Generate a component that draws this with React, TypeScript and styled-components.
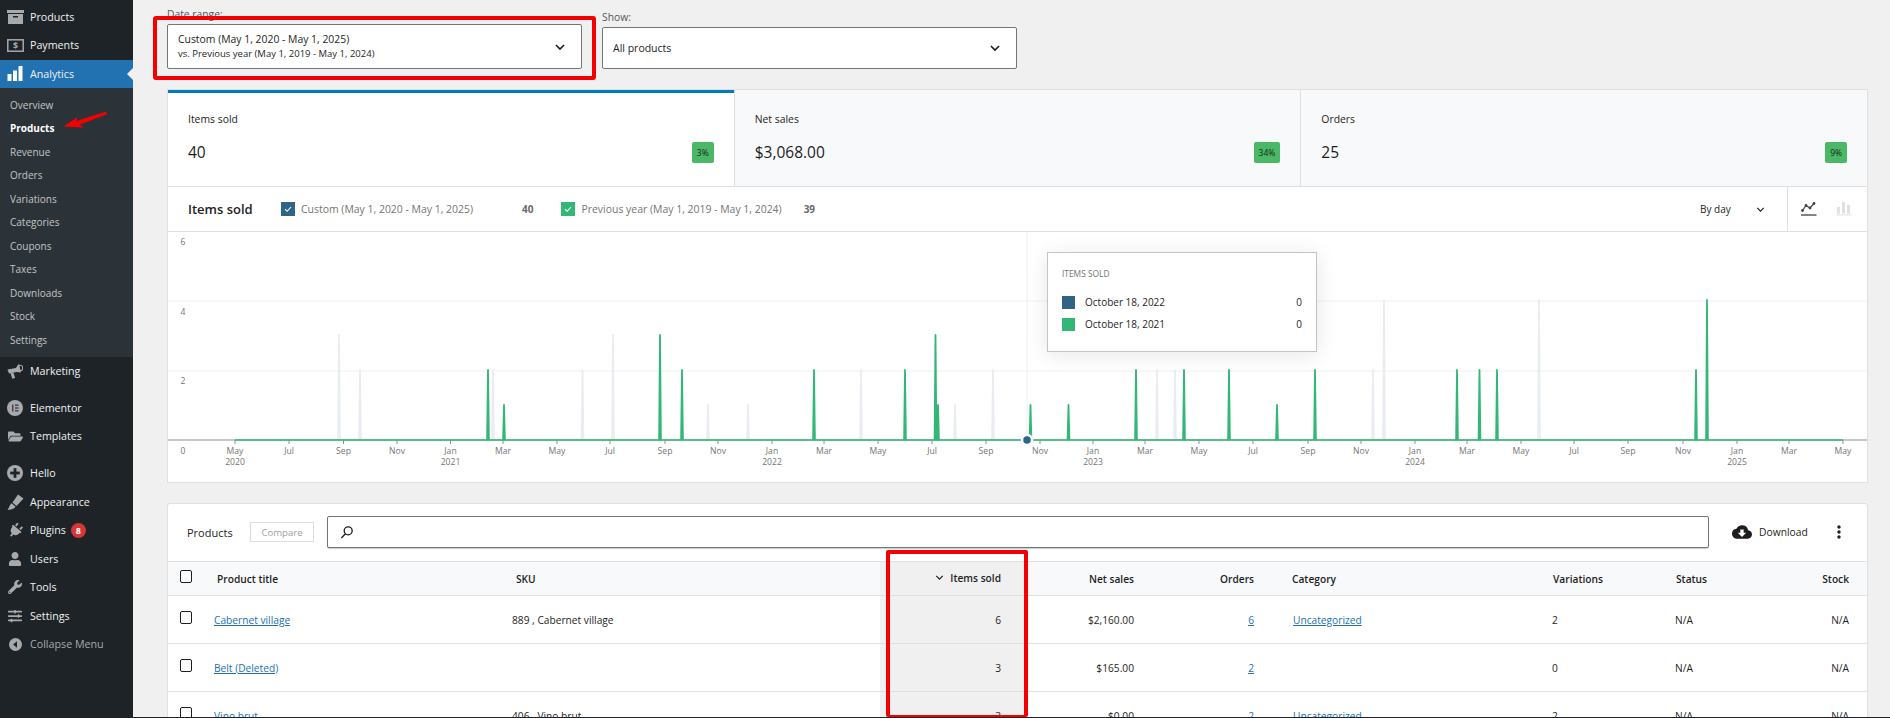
import React, { FC, ReactNode } from "react";
import styled, { createGlobalStyle } from "styled-components";
import { FaFolderOpen, FaPlug, FaUser, FaWrench, FaSlidersH } from "react-icons/fa";
import { MdCloudDownload, MdMoreVert } from "react-icons/md";

const FONT = `"Open Sans", "Noto Sans", sans-serif`;

const GlobalStyle = createGlobalStyle`
  html, body {
    margin: 0;
    padding: 0;
    height: 100%;
    overflow: hidden;
    background: #f0f0f0;
    font-family: ${FONT};
  }
`;

const Shell = styled.div`
  display: flex;
  height: 717px;
  overflow: hidden;
  border-bottom: 1px solid #1d2327;
`;

/* ---------- sidebar ---------- */

const Sidebar = styled.nav`
  position: relative;
  width: 133px;
  flex: none;
  background: #1d2327;
  padding-top: 2.6px;
  color: #f0f0f1;
  font-size: 10.7px;
`;

const MenuItem = styled.div<{ $active?: boolean; $gap?: boolean; $muted?: boolean }>`
  position: relative;
  display: flex;
  align-items: center;
  height: 28.5px;
  margin-top: ${(p) => (p.$gap ? "8.5px" : "0")};
  background: ${(p) => (p.$active ? "#2271b1" : "transparent")};
  color: ${(p) => (p.$muted ? "#a7aaad" : "#f0f0f1")};
  ${(p) =>
    p.$active &&
    `&::after {
      content: "";
      position: absolute;
      right: 0;
      top: 8px;
      border: 6px solid transparent;
      border-right-color: #f0f0f0;
    }`}
`;

const MenuIcon = styled.span<{ $active?: boolean }>`
  display: flex;
  justify-content: center;
  width: 30px;
  flex: none;
  color: ${(p) => (p.$active ? "#ffffff" : "#a7aaad")};
`;

const TiltedPlug = styled(FaPlug)`
  transform: rotate(40deg);
`;

const SubMenu = styled.div`
  background: #2c3338;
  padding: 5.5px 0 4.6px;
`;

const SubItem = styled.div<{ $current?: boolean }>`
  height: 23.5px;
  line-height: 23.5px;
  padding-left: 10px;
  font-size: 10px;
  color: ${(p) => (p.$current ? "#ffffff" : "#c3c4c7")};
  font-weight: ${(p) => (p.$current ? 700 : 400)};
`;

const Badge = styled.span`
  display: inline-flex;
  align-items: center;
  justify-content: center;
  width: 15px;
  height: 15px;
  margin-left: 5px;
  border-radius: 50%;
  background: #d63638;
  color: #fff;
  font-size: 9px;
  font-weight: 700;
`;

const ArrowMark = styled.svg`
  position: absolute;
  left: 60px;
  top: 108px;
`;

/* ---------- content ---------- */

const Main = styled.main`
  flex: 1;
  min-width: 0;
  padding: 0 22px 0 34px;
  color: #1e1e1e;
`;

const Filters = styled.div`
  display: flex;
  align-items: flex-end;
  height: 69px;
  margin-bottom: 20px;
`;

const FilterGroup = styled.div<{ $width: number; $gap: number }>`
  position: relative;
  width: ${(p) => p.$width}px;
  margin-right: ${(p) => p.$gap}px;
`;

const FilterLabel = styled.div`
  font-size: 10.3px;
  line-height: 14px;
  color: #50575e;
  margin-bottom: 3px;
`;

const SelectBox = styled.div<{ $height: number }>`
  display: flex;
  align-items: center;
  justify-content: space-between;
  height: ${(p) => p.$height}px;
  box-sizing: border-box;
  padding: 0 14px 0 10px;
  background: #fff;
  border: 1px solid #757575;
  border-radius: 2px;
  font-size: 10.5px;
`;

const SelectMain = styled.div`
  font-size: 10.4px;
  line-height: 15px;
`;

const SelectSub = styled.div`
  font-size: 9.5px;
  line-height: 14px;
`;

const RedFrame = styled.div`
  position: absolute;
  left: -14px;
  right: -14px;
  top: 9px;
  bottom: -11px;
  border: 4px solid #f30000;
  border-radius: 3px;
  pointer-events: none;
`;

const Panel = styled.section`
  background: #fff;
  border: 1px solid #e0e0e0;
`;

const StatRow = styled.div`
  display: flex;
  height: 96px;
  border-bottom: 1px solid #e0e0e0;
`;

const Stat = styled.div<{ $active?: boolean }>`
  flex: 1;
  box-sizing: border-box;
  padding: 21px 20px 0;
  background: ${(p) => (p.$active ? "#fff" : "#f8f9fa")};
  box-shadow: ${(p) => (p.$active ? "inset 0 3px 0 #007cba" : "none")};
  border-right: 1px solid #e0e0e0;
  &:last-child {
    border-right: 0;
  }
`;

const StatLabel = styled.div`
  font-size: 10.4px;
  line-height: 16px;
`;

const StatValueRow = styled.div`
  display: flex;
  align-items: center;
  justify-content: space-between;
  margin-top: 14px;
`;

const StatValue = styled.div`
  font-size: 15.5px;
  line-height: 22px;
`;

const Delta = styled.div`
  display: flex;
  align-items: center;
  height: 21px;
  padding: 0 5px;
  border-radius: 2px;
  background: #4ab866;
  font-size: 8.5px;
`;

const ChartHeader = styled.div`
  display: flex;
  align-items: center;
  height: 44px;
  padding-left: 20px;
  border-bottom: 1px solid #e0e0e0;
`;

const ChartTitle = styled.div`
  width: 93px;
  flex: none;
  font-size: 13px;
  font-weight: 600;
`;

const LegendBox = styled.span<{ $color: string }>`
  display: flex;
  align-items: center;
  justify-content: center;
  width: 14px;
  height: 14px;
  margin-right: 6px;
  background: ${(p) => p.$color};
`;

const LegendLabel = styled.span`
  font-size: 10.45px;
  color: #757575;
`;

const LegendValue = styled.span<{ $left: number; $right: number }>`
  margin: 0 ${(p) => p.$right}px 0 ${(p) => p.$left}px;
  font-size: 10px;
  font-weight: 700;
  color: #6a6a6a;
`;

const IntervalSelect = styled.div`
  display: flex;
  align-items: center;
  margin-left: auto;
  height: 100%;
  font-size: 10px;
`;

const IntervalLabel = styled.span`
  width: 55px;
`;

const ChartTools = styled.div`
  display: flex;
  align-items: center;
  gap: 19px;
  height: 100%;
  margin-left: 21px;
  padding: 0 15px 0 13px;
  border-left: 1px solid #e0e0e0;
`;

const ChartBody = styled.div`
  position: relative;
  height: 250px;
`;

const ChartSvg = styled.svg`
  display: block;
`;

const AxisText = styled.text`
  font-family: ${FONT};
  font-size: 8.6px;
  fill: #757575;
  text-anchor: middle;
`;

const Tooltip = styled.div`
  position: absolute;
  left: 879px;
  top: 20px;
  width: 270px;
  height: 100px;
  padding: 14px 14px 0;
  box-sizing: border-box;
  background: #fff;
  border: 1px solid #c4c4c4;
  box-shadow: 0 3px 20px rgba(18, 24, 30, 0.1);
`;

const TooltipTitle = styled.div`
  font-size: 8.4px;
  line-height: 14px;
  color: #757575;
  margin-bottom: 10px;
`;

const TooltipRow = styled.div`
  display: flex;
  align-items: center;
  height: 22px;
  font-size: 10px;
  color: #1e1e1e;
`;

const Swatch = styled.span<{ $color: string }>`
  width: 13px;
  height: 13px;
  margin-right: 10px;
  background: ${(p) => p.$color};
`;

const TooltipValue = styled.span`
  margin-left: auto;
`;

const TablePanel = styled(Panel)`
  margin-top: 20px;
  border-radius: 3px 3px 0 0;
`;

const TableHeader = styled.div`
  display: flex;
  align-items: center;
  height: 57px;
  box-sizing: border-box;
  padding: 0 0 1px 19px;
`;

const TableTitle = styled.div`
  width: 63px;
  flex: none;
  font-size: 11px;
`;

const CompareButton = styled.div`
  display: flex;
  align-items: center;
  justify-content: center;
  width: 64px;
  height: 20px;
  box-sizing: border-box;
  border: 1px solid #ddd;
  font-size: 9.6px;
  color: #a0a0a0;
`;

const SearchBox = styled.div`
  display: flex;
  align-items: center;
  width: 1382px;
  height: 32px;
  box-sizing: border-box;
  margin-left: 13px;
  padding-left: 12px;
  background: #fff;
  border: 1px solid #757575;
  border-radius: 2px;
  box-shadow: 0 1px 1px rgba(0, 0, 0, 0.2);
`;

const DownloadButton = styled.div`
  display: flex;
  align-items: center;
  gap: 7px;
  margin-left: 23px;
  font-size: 10.3px;
`;

const MenuDots = styled.div`
  display: flex;
  margin-left: 21px;
`;

const Table = styled.table`
  width: 100%;
  table-layout: fixed;
  border-collapse: collapse;
  font-size: 10.2px;
`;

const Th = styled.th<{ $w?: number; $right?: boolean; $pl?: number; $pr?: number; $sorted?: boolean }>`
  width: ${(p) => (p.$w ? `${p.$w}px` : "auto")};
  height: 34px;
  box-sizing: border-box;
  padding: 0 ${(p) => p.$pr ?? 0}px 0 ${(p) => p.$pl ?? 0}px;
  text-align: ${(p) => (p.$right ? "right" : "left")};
  font-size: 10.2px;
  font-weight: 600;
  background: ${(p) => (p.$sorted ? "#f0f0f0" : "#f8f9fa")};
  border-top: 1px solid #e0e0e0;
  border-bottom: 1px solid #e0e0e0;
`;

const Td = styled.td<{ $right?: boolean; $pl?: number; $pr?: number; $sorted?: boolean }>`
  height: 48px;
  box-sizing: border-box;
  padding: 0 ${(p) => p.$pr ?? 0}px 0 ${(p) => p.$pl ?? 0}px;
  text-align: ${(p) => (p.$right ? "right" : "left")};
  background: ${(p) => (p.$sorted ? "#f0f0f0" : "#fff")};
  border-bottom: 1px solid #e0e0e0;
`;

const CheckBox = styled.span`
  display: block;
  width: 12px;
  height: 13px;
  box-sizing: border-box;
  margin-top: -4px;
  border: 1px solid #1e1e1e;
  border-radius: 2px;
  background: #fff;
`;

const CellLink = styled.a`
  color: #2271b1;
  text-decoration: underline;
`;

const SortedHead = styled.span`
  display: inline-flex;
  align-items: center;
  gap: 5px;
`;

const SortFrame = styled.div`
  position: absolute;
  left: 886px;
  top: 550px;
  width: 142px;
  height: 167px;
  box-sizing: border-box;
  border: 4px solid #f30000;
  border-bottom-width: 2px;
  border-radius: 2px;
  pointer-events: none;
`;

/* ---------- icons ---------- */

const Chevron: FC<{ size?: number; width?: number; color?: string }> = ({ size = 14, width = 1.6, color = "#1e1e1e" }) => (
  <svg width={size} height={size} viewBox="0 0 24 24" fill="none" stroke={color} strokeWidth={width * (24 / size)}>
    <path d="M5 8.5l7 7 7-7" />
  </svg>
);

const Tick: FC = () => (
  <svg width="10" height="10" viewBox="0 0 10 10" fill="none" stroke="#fff" strokeWidth="1.1">
    <path d="M2 5.2l2.1 2.1L8 3" />
  </svg>
);

const ArchiveIcon: FC = () => (
  <svg width="17" height="14" viewBox="0 0 17 14" fill="currentColor">
    <rect x="0" y="0" width="17" height="3" />
    <path d="M1 4h15v10H1z M6 6v1.4h5V6z" fillRule="evenodd" />
  </svg>
);

const PaymentIcon: FC = () => (
  <svg width="17" height="13" viewBox="0 0 17 13">
    <rect x="0.8" y="0.8" width="15.4" height="11.4" fill="none" stroke="currentColor" strokeWidth="1.5" />
    <text x="8.5" y="9.6" fontSize="9" fontWeight="700" textAnchor="middle" fill="currentColor" fontFamily={FONT}>
      $
    </text>
  </svg>
);

const BarsIcon: FC = () => (
  <svg width="16" height="15" viewBox="0 0 16 15" fill="currentColor">
    <rect x="0.5" y="8" width="4" height="7" />
    <rect x="6" y="4.5" width="4" height="10.5" />
    <rect x="11.5" y="0" width="4" height="15" />
  </svg>
);

const MegaphoneIcon: FC = () => (
  <svg width="16" height="16" viewBox="0 0 16 16" fill="currentColor">
    <path d="M0.5 6.5L9 5 12 0.8 14 9.5 9.8 9 2 10.5z" />
    <path d="M3.5 10.3l3-.6 1.6 5.3-2.8.8z" />
    <circle cx="13" cy="5" r="2.8" fill="none" stroke="currentColor" strokeWidth="1.1" />
  </svg>
);

const BrushIcon: FC = () => (
  <svg width="17" height="16" viewBox="0 0 17 16" fill="currentColor">
    <path d="M11 0.5L16.5 4.5 9.5 12 5.5 8.5z" />
    <path d="M4.7 9.3l3.9 3.4C7 15 3.5 15.8 0.5 16c1.8-2 1.6-5 4.2-6.7z" />
  </svg>
);

const ElementorIcon: FC = () => (
  <svg width="16" height="16" viewBox="0 0 16 16">
    <circle cx="8" cy="8" r="8" fill="#a7aaad" />
    <rect x="5" y="4.5" width="1.5" height="7" fill="#5c3a58" />
    <rect x="8" y="4.5" width="3.5" height="1.4" fill="#3a3f44" />
    <rect x="8" y="7.3" width="3.5" height="1.4" fill="#3a3f44" />
    <rect x="8" y="10.1" width="3.5" height="1.4" fill="#3a3f44" />
  </svg>
);

const HelloIcon: FC = () => (
  <svg width="16" height="16" viewBox="0 0 16 16">
    <circle cx="8" cy="8" r="8" fill="currentColor" />
    <rect x="6.6" y="3.2" width="2.8" height="9.6" fill="#1d2327" />
    <rect x="3.2" y="6.6" width="9.6" height="2.8" fill="#1d2327" />
  </svg>
);

const CollapseIcon: FC = () => (
  <svg width="13" height="13" viewBox="0 0 13 13">
    <circle cx="6.5" cy="6.5" r="6.5" fill="currentColor" />
    <path d="M8 3.2L4 6.5l4 3.3z" fill="#1d2327" />
  </svg>
);

const SearchIcon: FC = () => (
  <svg width="14" height="14" viewBox="0 0 14 14" fill="none" stroke="#1e1e1e" strokeWidth="1.3">
    <circle cx="8.2" cy="5.8" r="4" />
    <path d="M5.5 8.8L1.4 13" />
  </svg>
);

const LineChartIcon: FC = () => (
  <svg width="16" height="16" viewBox="0 0 16 16" fill="none" stroke="#3c434a" strokeWidth="1.2">
    <path d="M1.5 9.5L5 4.5l4 2.5 4-4.5" />
    <g fill="#3c434a" stroke="none">
      <circle cx="1.5" cy="9.5" r="1.4" />
      <circle cx="5" cy="4.5" r="1.4" />
      <circle cx="9" cy="7" r="1.4" />
      <circle cx="13" cy="2.5" r="1.4" />
    </g>
    <path d="M0 14h15.5" strokeWidth="1.3" />
  </svg>
);

const BarChartIcon: FC = () => (
  <svg width="16" height="16" viewBox="0 0 16 16" fill="#e0e0e0">
    <rect x="1" y="6" width="3" height="6.5" />
    <rect x="6" y="1" width="3" height="11.5" />
    <rect x="11" y="4" width="3" height="8.5" />
    <rect x="0" y="13.4" width="15.5" height="1" />
  </svg>
);

/* ---------- data ---------- */

const BASE_Y = 208;
const UNIT = 35;

const MONTHS = [
  ["May", "2020", 235], ["Jul", "", 289], ["Sep", "", 343.5], ["Nov", "", 397], ["Jan", "2021", 450.5],
  ["Mar", "", 503], ["May", "", 557], ["Jul", "", 610], ["Sep", "", 665], ["Nov", "", 718],
  ["Jan", "2022", 772], ["Mar", "", 824], ["May", "", 878], ["Jul", "", 932], ["Sep", "", 986],
  ["Nov", "", 1040], ["Jan", "2023", 1093], ["Mar", "", 1145], ["May", "", 1199], ["Jul", "", 1253],
  ["Sep", "", 1308], ["Nov", "", 1361], ["Jan", "2024", 1415], ["Mar", "", 1467], ["May", "", 1521],
  ["Jul", "", 1574], ["Sep", "", 1628], ["Nov", "", 1683], ["Jan", "2025", 1737], ["Mar", "", 1789], ["May", "", 1843],
] as const;

const PREVIOUS = [
  [339, 3], [360, 2], [493, 2], [582.5, 2], [613, 3], [708, 1], [748, 1], [861, 2],
  [955, 1], [993, 2], [1157, 2], [1175, 2], [1373, 2], [1384, 4], [1539, 4],
];

const CURRENT = [
  [488, 2], [504, 1], [660, 3], [682, 2], [814, 2], [905, 2], [935.5, 3], [938, 1], [1030.5, 1], [1068.5, 1],
  [1136, 2], [1184, 2], [1229, 2], [1277, 1], [1315, 2], [1457, 2], [1479.5, 2], [1497, 2], [1696, 2], [1707, 4],
];

const spikes = (points: number[][]) =>
  points
    .map(([x, v]) => {
      const px = x - 168;
      return `M${px - 0.9} ${BASE_Y}L${px} ${BASE_Y - v * UNIT}L${px + 0.9} ${BASE_Y}`;
    })
    .join("");

const menuTop: { label: string; icon: ReactNode }[] = [
  { label: "Products", icon: <ArchiveIcon /> },
  { label: "Payments", icon: <PaymentIcon /> },
];

const subItems = ["Overview", "Products", "Revenue", "Orders", "Variations", "Categories", "Coupons", "Taxes", "Downloads", "Stock", "Settings"];

const rows = [
  { title: "Cabernet village", sku: "889 , Cabernet village", items: "6", net: "$2,160.00", orders: "6", category: "Uncategorized", variations: "2" },
  { title: "Belt (Deleted)", sku: "", items: "3", net: "$165.00", orders: "2", category: "", variations: "0" },
  { title: "Vino brut", sku: "406 , Vino brut", items: "3", net: "$0.00", orders: "2", category: "Uncategorized", variations: "2" },
];

const Chart: FC = () => (
  <ChartSvg width="1699" height="250" viewBox="0 0 1699 250">
    <path d="M0 69H1699M0 139H1699" stroke="#f0f0f1" strokeWidth="1" />
    <path d="M859 0V208" stroke="#eeeeee" strokeWidth="1" />
    <path d={spikes(PREVIOUS)} fill="none" stroke="#e9edf1" strokeWidth="1.8" strokeLinejoin="round" />
    <path d={`M0 ${BASE_Y}H1699`} stroke="#8c8f94" strokeWidth="1" />
    {MONTHS.map(([, , x]) => (
      <path key={x} d={`M${x - 168} ${BASE_Y}v4`} stroke="#8c8f94" strokeWidth="1" />
    ))}
    <path d={`M67 ${BASE_Y}H1675`} stroke="#33b777" strokeWidth="1.6" />
    <path d={spikes(CURRENT)} fill="none" stroke="#33b777" strokeWidth="1.8" strokeLinejoin="round" />
    <circle cx="859" cy={BASE_Y} r="5" fill="#2f6487" stroke="#fff" strokeWidth="2.5" />
    {["6", "4", "2", "0"].map((v, i) => (
      <AxisText key={v} x="15" y={13 + i * 69.5}>
        {v}
      </AxisText>
    ))}
    {MONTHS.map(([m, y, x]) => (
      <g key={x}>
        <AxisText x={x - 168} y="222">
          {m}
        </AxisText>
        {y && (
          <AxisText x={x - 168} y="233">
            {y}
          </AxisText>
        )}
      </g>
    ))}
  </ChartSvg>
);

const App: FC = () => (
  <>
    <GlobalStyle />
    <Shell>
      <Sidebar>
        {menuTop.map((m) => (
          <MenuItem key={m.label}>
            <MenuIcon>{m.icon}</MenuIcon>
            {m.label}
          </MenuItem>
        ))}
        <MenuItem $active>
          <MenuIcon $active>
            <BarsIcon />
          </MenuIcon>
          Analytics
        </MenuItem>
        <SubMenu>
          {subItems.map((s) => (
            <SubItem key={s} $current={s === "Products"}>
              {s}
            </SubItem>
          ))}
        </SubMenu>
        <MenuItem>
          <MenuIcon><MegaphoneIcon /></MenuIcon>
          Marketing
        </MenuItem>
        <MenuItem $gap>
          <MenuIcon><ElementorIcon /></MenuIcon>
          Elementor
        </MenuItem>
        <MenuItem>
          <MenuIcon><FaFolderOpen size={15} /></MenuIcon>
          Templates
        </MenuItem>
        <MenuItem $gap>
          <MenuIcon><HelloIcon /></MenuIcon>
          Hello
        </MenuItem>
        <MenuItem>
          <MenuIcon><BrushIcon /></MenuIcon>
          Appearance
        </MenuItem>
        <MenuItem>
          <MenuIcon><TiltedPlug size={15} /></MenuIcon>
          Plugins
          <Badge>8</Badge>
        </MenuItem>
        <MenuItem>
          <MenuIcon><FaUser size={14} /></MenuIcon>
          Users
        </MenuItem>
        <MenuItem>
          <MenuIcon><FaWrench size={14} /></MenuIcon>
          Tools
        </MenuItem>
        <MenuItem>
          <MenuIcon><FaSlidersH size={14} /></MenuIcon>
          Settings
        </MenuItem>
        <MenuItem $muted>
          <MenuIcon><CollapseIcon /></MenuIcon>
          Collapse Menu
        </MenuItem>
        <ArrowMark width="50" height="22" viewBox="0 0 50 22">
          <path d="M3.5 18.5L17 9.5l-0.5 3.5L46 3.5l1 2.8L20 16.5l3 3z" fill="#f30000" />
        </ArrowMark>
      </Sidebar>
      <Main>
        <Filters>
          <FilterGroup $width={415} $gap={20}>
            <FilterLabel>Date range:</FilterLabel>
            <SelectBox $height={45}>
              <div>
                <SelectMain>Custom (May 1, 2020 - May 1, 2025)</SelectMain>
                <SelectSub>vs. Previous year (May 1, 2019 - May 1, 2024)</SelectSub>
              </div>
              <Chevron />
            </SelectBox>
            <RedFrame />
          </FilterGroup>
          <FilterGroup $width={415} $gap={0}>
            <FilterLabel>Show:</FilterLabel>
            <SelectBox $height={42}>
              All products
              <Chevron />
            </SelectBox>
          </FilterGroup>
        </Filters>

        <Panel>
          <StatRow>
            <Stat $active>
              <StatLabel>Items sold</StatLabel>
              <StatValueRow>
                <StatValue>40</StatValue>
                <Delta>3%</Delta>
              </StatValueRow>
            </Stat>
            <Stat>
              <StatLabel>Net sales</StatLabel>
              <StatValueRow>
                <StatValue>$3,068.00</StatValue>
                <Delta>34%</Delta>
              </StatValueRow>
            </Stat>
            <Stat>
              <StatLabel>Orders</StatLabel>
              <StatValueRow>
                <StatValue>25</StatValue>
                <Delta>9%</Delta>
              </StatValueRow>
            </Stat>
          </StatRow>
          <ChartHeader>
            <ChartTitle>Items sold</ChartTitle>
            <LegendBox $color="#2f6487"><Tick /></LegendBox>
            <LegendLabel>Custom (May 1, 2020 - May 1, 2025)</LegendLabel>
            <LegendValue $left={49} $right={28}>40</LegendValue>
            <LegendBox $color="#33b777"><Tick /></LegendBox>
            <LegendLabel>Previous year (May 1, 2019 - May 1, 2024)</LegendLabel>
            <LegendValue $left={22} $right={0}>39</LegendValue>
            <IntervalSelect>
              <IntervalLabel>By day</IntervalLabel>
              <Chevron size={11} width={1.2} />
            </IntervalSelect>
            <ChartTools>
              <LineChartIcon />
              <BarChartIcon />
            </ChartTools>
          </ChartHeader>
          <ChartBody>
            <Chart />
            <Tooltip>
              <TooltipTitle>ITEMS SOLD</TooltipTitle>
              <TooltipRow>
                <Swatch $color="#2f6487" />
                October 18, 2022
                <TooltipValue>0</TooltipValue>
              </TooltipRow>
              <TooltipRow>
                <Swatch $color="#33b777" />
                October 18, 2021
                <TooltipValue>0</TooltipValue>
              </TooltipRow>
            </Tooltip>
          </ChartBody>
        </Panel>

        <TablePanel>
          <TableHeader>
            <TableTitle>Products</TableTitle>
            <CompareButton>Compare</CompareButton>
            <SearchBox>
              <SearchIcon />
            </SearchBox>
            <DownloadButton>
              <MdCloudDownload size={20} />
              Download
            </DownloadButton>
            <MenuDots>
              <MdMoreVert size={20} />
            </MenuDots>
          </TableHeader>
          <Table>
            <thead>
              <tr>
                <Th $w={46} $pl={12}><CheckBox /></Th>
                <Th $w={298} $pl={3}>Product title</Th>
                <Th $w={368} $pl={4}>SKU</Th>
                <Th $w={147} $right $pr={26} $sorted>
                  <SortedHead>
                    <Chevron size={11} width={1.2} />
                    Items sold
                  </SortedHead>
                </Th>
                <Th $w={107} $right>Net sales</Th>
                <Th $w={120} $right>Orders</Th>
                <Th $w={298} $pl={38}>Category</Th>
                <Th $w={123} $pl={1}>Variations</Th>
                <Th $w={115} $pl={1}>Status</Th>
                <Th $right $pr={18}>Stock</Th>
              </tr>
            </thead>
            <tbody>
              {rows.map((r) => (
                <tr key={r.title}>
                  <Td $pl={12}><CheckBox /></Td>
                  <Td><CellLink>{r.title}</CellLink></Td>
                  <Td>{r.sku}</Td>
                  <Td $right $pr={26} $sorted>{r.items}</Td>
                  <Td $right>{r.net}</Td>
                  <Td $right><CellLink>{r.orders}</CellLink></Td>
                  <Td $pl={39}><CellLink>{r.category}</CellLink></Td>
                  <Td>{r.variations}</Td>
                  <Td>N/A</Td>
                  <Td $right $pr={18}>N/A</Td>
                </tr>
              ))}
            </tbody>
          </Table>
        </TablePanel>
      </Main>
      <SortFrame />
    </Shell>
  </>
);

export default App;
